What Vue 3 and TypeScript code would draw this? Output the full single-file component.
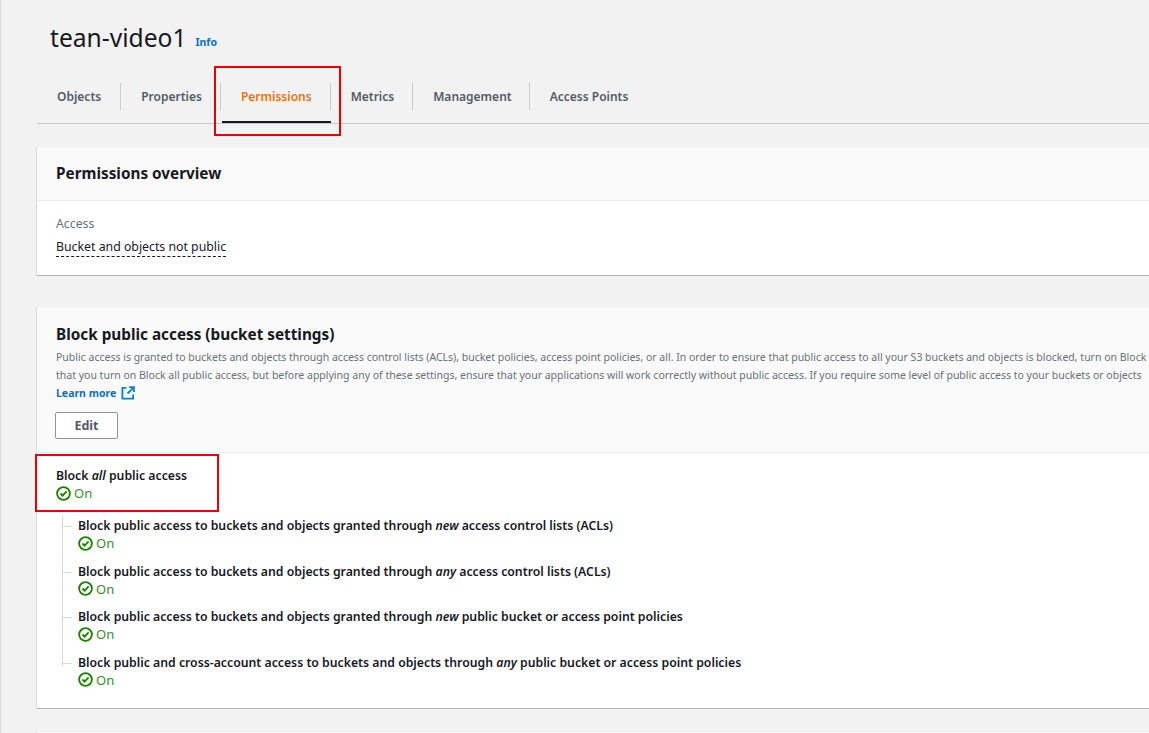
<script setup lang="ts">
interface Row { before: string; em: string; after: string }
const tabs = ['Objects', 'Properties', 'Permissions', 'Metrics', 'Management', 'Access Points']
const rows: Row[] = [
  { before: 'Block public access to buckets and objects granted through ', em: 'new', after: ' access control lists (ACLs)' },
  { before: 'Block public access to buckets and objects granted through ', em: 'any', after: ' access control lists (ACLs)' },
  { before: 'Block public access to buckets and objects granted through ', em: 'new', after: ' public bucket or access point policies' },
  { before: 'Block public and cross-account access to buckets and objects through ', em: 'any', after: ' public bucket or access point policies' },
]
</script>

<template>
  <div class="page">
    <main class="content">
      <header class="title-row">
        <h1>tean-video1</h1>
        <a class="info">Info</a>
      </header>

      <nav class="tabs">
        <div v-for="t in tabs" :key="t" class="tab" :class="{ active: t === 'Permissions' }">{{ t }}</div>
      </nav>

      <section class="card overview">
        <div class="card-head"><h2>Permissions overview</h2></div>
        <div class="overview-body">
          <div class="label">Access</div>
          <div class="value"><span>Bucket and objects not public</span></div>
        </div>
      </section>

      <section class="card block">
        <div class="block-head">
          <h2>Block public access (bucket settings)</h2>
          <p>Public access is granted to buckets and objects through access control lists (ACLs), bucket policies, access point policies, or all. In order to ensure that public access to all your S3 buckets and objects is blocked, turn on Block</p>
          <p>that you turn on Block all public access, but before applying any of these settings, ensure that your applications will work correctly without public access. If you require some level of public access to your buckets or objects</p>
          <a class="learn">Learn more
            <svg width="14" height="14" viewBox="0 0 15 15" fill="none" stroke="#0f7fd0" stroke-width="2"><path d="M6 2H1.5v11.5H13V9" /><path d="M7 8l6.5-6.5M8.5 1.2h5.3v5.3" /></svg>
          </a>
          <button class="edit">Edit</button>
        </div>
        <div class="block-body">
          <div class="setting">
            <div class="setting-title">Block <em>all</em> public access</div>
            <div class="status">
              <svg width="15" height="15" viewBox="0 0 16 16" fill="none" stroke="#1d8102" stroke-width="2"><circle cx="8" cy="8" r="6.8" /><path d="M4.8 8l2.3 2.4 4.2-4.6" /></svg>
              On
            </div>
          </div>
          <ul class="tree">
            <li v-for="(r, i) in rows" :key="i" class="setting">
              <div class="setting-title">{{ r.before }}<em>{{ r.em }}</em>{{ r.after }}</div>
              <div class="status">
                <svg width="15" height="15" viewBox="0 0 16 16" fill="none" stroke="#1d8102" stroke-width="2"><circle cx="8" cy="8" r="6.8" /><path d="M4.8 8l2.3 2.4 4.2-4.6" /></svg>
                On
              </div>
            </li>
          </ul>
        </div>
      </section>

      <section class="card next"></section>
    </main>

    <div class="mark mark-tab"></div>
    <div class="mark mark-all"></div>
  </div>
</template>

<style>
html, body { margin: 0; background: #f2f2f2; }
</style>

<style scoped>
.page {
  position: relative;
  width: 1149px;
  height: 733px;
  box-sizing: border-box;
  overflow: hidden;
  background: #f2f2f2;
  border-left: 1px solid #d5dbdb;
  font-family: "Noto Sans", "Open Sans", sans-serif;
  color: #16191f;
}
.content { padding-left: 36px; width: 1300px; box-sizing: border-box; }
.title-row { display: flex; align-items: flex-end; gap: 9px; height: 55px; padding-left: 13px; }
h1 { margin: 0; font-size: 24.6px; line-height: 34px; font-weight: 400; }
.info { font-size: 10.5px; font-weight: 700; color: #0f6fbf; line-height: 14px; padding-bottom: 6px; }
.tabs { display: flex; height: 53px; margin-top: 15px; border-bottom: 1px solid #c4c8c8; box-sizing: content-box; }
.tab {
  position: relative;
  box-sizing: border-box;
  height: 53px;
  padding: 18px 19px 0 20px;
  font-size: 12px;
  font-weight: 600;
  line-height: 18px;
  color: #545b64;
}
.tab:first-child { padding-right: 20px; }
.tab:nth-child(5) { padding-right: 18px; }
.tab::before {
  content: "";
  position: absolute;
  right: 0;
  top: 13px;
  height: 27px;
  width: 1px;
  background: #c8cdcd;
}
.tab:last-child::before { display: none; }
.tab.active { color: #ec7211; }
.tab.active::after {
  content: "";
  position: absolute;
  left: 1px;
  right: 0;
  bottom: 0;
  height: 2px;
  background: #16191f;
}
.card { background: #fff; border-bottom: 1px solid #aab7b8; box-shadow: -1px 0 0 #d5dbdb; }
.overview { margin-top: 23px; height: 129px; box-sizing: border-box; }
.card-head { height: 54px; box-sizing: border-box; padding: 16px 19px 0; background: #fafafa; border-bottom: 1px solid #eaeded; }
h2 { margin: 0; font-size: 15.3px; font-weight: 700; line-height: 20px; }
.overview-body { padding: 14px 19px 0; }
.label { font-size: 12.3px; line-height: 17px; color: #687078; }
.value { margin-top: 6px; font-size: 12.3px; line-height: 17px; }
.value span { border-bottom: 1px dashed #16191f; padding-bottom: 1px; display: inline-block; }
.block { margin-top: 31px; height: 402px; box-sizing: border-box; }
.block-head { height: 146px; box-sizing: border-box; padding: 17px 19px 0; background: #fafafa; border-bottom: 1px solid #eaeded; }
.block-head p { margin: 0; font-size: 10.5px; line-height: 18px; color: #687078; white-space: nowrap; }
.block-head h2 { margin-bottom: 4px; }
.learn { display: flex; align-items: center; gap: 5px; font-size: 10.5px; font-weight: 700; line-height: 18px; color: #0f6fbf; }
.edit {
  display: block;
  margin: 10px 0 0 -1px;
  width: 63px;
  height: 27px;
  padding: 0;
  background: #fff;
  border: 1px solid #8d9494;
  border-radius: 2px;
  font: 700 12.5px "Noto Sans", sans-serif;
  color: #545b64;
}
.block-body { padding: 14px 19px 0; }
.setting-title { font-size: 12.25px; line-height: 17px; font-weight: 600; color: #16191f; white-space: nowrap; }
.status { display: flex; align-items: center; gap: 3px; padding-bottom: 1px; font-size: 13px; line-height: 18px; color: #3d8a2a; }
.tree { list-style: none; margin: 0; padding: 0 0 0 22px; position: relative; }
.tree::before {
  content: "";
  position: absolute;
  left: 6px;
  top: -1px;
  height: 150px;
  width: 1px;
  background: #d5dbdb;
}
.tree .setting { position: relative; margin-top: 9.5px; }
.tree .setting:first-child { margin-top: 14px; }
.tree .setting::before {
  content: "";
  position: absolute;
  left: -16px;
  top: 9px;
  width: 10px;
  height: 1px;
  background: #d5dbdb;
}
.next { margin-top: 22px; height: 40px; border-top: 1px solid #eaeded; }
.mark { position: absolute; border: 2px solid #ee0000; box-sizing: border-box; }
.mark-tab { left: 213px; top: 66px; width: 127px; height: 70px; }
.mark-all { left: 34px; top: 454px; width: 184px; height: 58px; }
</style>
